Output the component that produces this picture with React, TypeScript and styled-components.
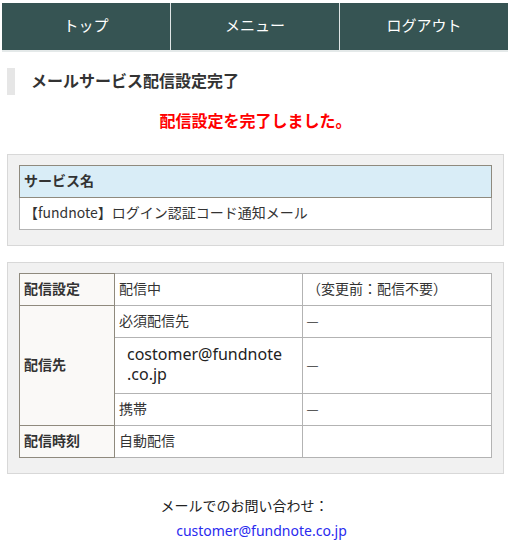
import React from 'react';
import styled, { createGlobalStyle } from 'styled-components';

const GlobalStyle = createGlobalStyle`
  body {
    margin: 0;
    background: #fff;
    color: #333;
    font-family: "Noto Sans CJK JP", "Noto Sans", sans-serif;
  }
`;

const Nav = styled.nav`
  display: flex;
  margin: 3px 0 0 2px;
  height: 47px;
  background: #365453;
  border-bottom: 2px solid #e4e9e9;
`;

const NavItem = styled.a`
  flex: 1;
  display: flex;
  align-items: center;
  justify-content: center;
  padding-bottom: 4px;
  color: #fff;
  font-size: 15px;
  text-decoration: none;
  & + & {
    border-left: 1px solid #dfe5e5;
  }
`;

const Content = styled.div`
  padding: 0 4px 0 7px;
`;

const PageTitle = styled.h1`
  display: flex;
  align-items: center;
  margin: 16px 0 0;
  height: 27px;
  padding: 0 0 3px 16px;
  box-sizing: border-box;
  border-left: 8px solid #e6e6e6;
  font-size: 16px;
  font-weight: bold;
  color: #333;
`;

const Message = styled.p`
  margin: 14px 0 0;
  text-align: center;
  color: #f00;
  font-size: 16px;
  font-weight: bold;
  line-height: 22px;
`;

const Panel = styled.div<{ $gap?: number }>`
  margin-top: ${(p) => p.$gap ?? 16}px;
  background: #f1f1f1;
  border: 1px solid #d8d8d8;
  padding: 10px 11px 15px;
`;

const Table = styled.table`
  width: 100%;
  border-collapse: collapse;
  border: 1px solid #8f8a7e;
  font-size: 14px;
  line-height: 20px;
  background: #fff;
`;

const Th = styled.th<{ $blue?: boolean }>`
  height: 28px;
  padding: 0 4px 3px;
  text-align: left;
  font-weight: bold;
  color: #333;
  background: ${(p) => (p.$blue ? '#d9edf7' : '#faf9f7')};
  border: 1px solid #8f8a7e;
`;

const Td = styled.td<{ $w?: number }>`
  height: 28px;
  padding: 0 4px 3px;
  color: #333;
  border: 1px solid #b3b3b3;
  width: ${(p) => (p.$w ? `${p.$w}px` : 'auto')};
`;

const MailTd = styled(Td)`
  padding: 6px 4px 9px 12px;
  font-family: "Noto Sans", "DejaVu Sans", sans-serif;
  font-size: 16px;
  color: #222;
`;

const Dash = styled.span`
  font-family: "Liberation Sans", sans-serif;
  font-size: 11px;
  color: #333;
`;

const Footer = styled.div`
  display: flex;
  flex-direction: column;
  align-items: center;
  margin-top: 19px;
  font-size: 14px;
  line-height: 25px;
`;

const FooterLabel = styled.span`
  margin-right: 22px;
  color: #222;
`;

const FooterLink = styled.a`
  margin-left: 12px;
  color: #2a2aef;
  text-decoration: none;
  font-family: "Noto Sans", "Noto Sans CJK JP", sans-serif;
`;

export default function App() {
  return (
    <>
      <GlobalStyle />
      <Nav>
        <NavItem>トップ</NavItem>
        <NavItem>メニュー</NavItem>
        <NavItem>ログアウト</NavItem>
      </Nav>
      <Content>
        <PageTitle>メールサービス配信設定完了</PageTitle>
        <Message>配信設定を完了しました。</Message>

        <Panel $gap={23}>
          <Table>
            <tbody>
              <tr>
                <Th $blue>サービス名</Th>
              </tr>
              <tr>
                <Td>【fundnote】ログイン認証コード通知メール</Td>
              </tr>
            </tbody>
          </Table>
        </Panel>

        <Panel>
          <Table>
            <tbody>
              <tr>
                <Th style={{ width: 86 }}>配信設定</Th>
                <Td $w={179}>配信中</Td>
                <Td>（変更前：配信不要）</Td>
              </tr>
              <tr>
                <Th rowSpan={3}>配信先</Th>
                <Td>必須配信先</Td>
                <Td>
                  <Dash>—</Dash>
                </Td>
              </tr>
              <tr>
                <MailTd>
                  costomer@fundnote
                  <br />
                  .co.jp
                </MailTd>
                <Td>
                  <Dash>—</Dash>
                </Td>
              </tr>
              <tr>
                <Td>携帯</Td>
                <Td>
                  <Dash>—</Dash>
                </Td>
              </tr>
              <tr>
                <Th>配信時刻</Th>
                <Td>自動配信</Td>
                <Td></Td>
              </tr>
            </tbody>
          </Table>
        </Panel>

        <Footer>
          <FooterLabel>メールでのお問い合わせ：</FooterLabel>
          <FooterLink href="mailto:customer@fundnote.co.jp">
            customer@fundnote.co.jp
          </FooterLink>
        </Footer>
      </Content>
    </>
  );
}
